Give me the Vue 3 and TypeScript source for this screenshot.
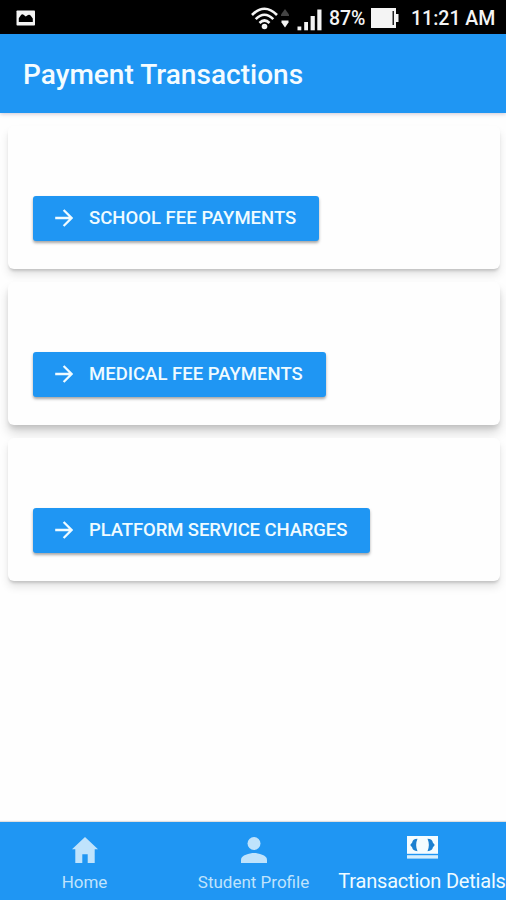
<script setup lang="ts">
interface Payment {
  id: string
  label: string
}

const payments: Payment[] = [
  { id: 'school', label: 'SCHOOL FEE PAYMENTS' },
  { id: 'medical', label: 'MEDICAL FEE PAYMENTS' },
  { id: 'platform', label: 'PLATFORM SERVICE CHARGES' },
]
</script>

<template>
  <div class="screen">
    <div class="status">
      <svg class="photo" viewBox="0 0 20 16" width="20" height="16">
        <rect x="0.5" y="0.5" width="18.5" height="15" rx="0.8" fill="#f4f4f4" />
        <path d="M2.8 12V8.2L5.2 4.8Q6.4 3.6 7.6 4.8L9.7 6.6L12 5Q13.5 4.2 14.6 5.4L16.8 8.6V12Z" fill="#000" />
      </svg>
      <svg class="wifi" viewBox="0 0 27 23" width="27" height="23">
        <g fill="none" stroke="#f4f4f4" stroke-width="2.6">
          <path d="M1 8Q13.5 -4.6 26 8" />
          <path d="M4.7 12.2Q13.5 3.2 22.3 12.2" />
          <path d="M8.5 16Q13.5 11 18.5 16" />
        </g>
        <circle cx="13.5" cy="19.5" r="2.8" fill="#f4f4f4" />
      </svg>
      <svg class="traffic" viewBox="0 0 8 20" width="8" height="20">
        <path d="M4 0L8 5.5V7H0V5.5Z" fill="#444" />
        <path d="M0.5 11.5H7.5V13.5L4 18.5L0.5 13.5Z" fill="#f4f4f4" />
      </svg>
      <svg class="signal" viewBox="0 0 25 22" width="25" height="22">
        <g fill="#f4f4f4">
          <rect x="0.5" y="17.5" width="3.8" height="3.8" />
          <rect x="7.2" y="13" width="3.8" height="8.3" />
          <rect x="13.6" y="7" width="4.2" height="14.3" />
          <rect x="20.3" y="0.5" width="4.2" height="20.8" />
        </g>
      </svg>
      <span class="percent">87%</span>
      <svg class="battery" viewBox="0 0 28 20" width="28" height="20">
        <path d="M0 0H25V6H27.5V14H25V20H0Z" fill="#f4f4f4" />
        <rect x="21.5" y="3" width="1.5" height="14" fill="#222" />
      </svg>
      <span class="clock">11:21 AM</span>
    </div>

    <header class="toolbar">
      <h1>Payment Transactions</h1>
    </header>

    <main class="content">
      <section v-for="payment in payments" :key="payment.id" class="card" :class="payment.id">
        <button type="button" class="action">
          <svg viewBox="0 0 18 18" width="18" height="18">
            <path d="M0.2 9H16.5M8.6 1L16.6 9L8.6 17" fill="none" stroke="#effbff" stroke-width="2.3" />
          </svg>
          <span>{{ payment.label }}</span>
        </button>
      </section>
    </main>

    <nav class="tabs">
      <a class="tab home">
        <svg viewBox="0 0 26 26" width="26" height="26">
          <path d="M13 0L26 12.2H22.7V26H15.7V17.3H10.3V26H3.3V12.2H0Z" fill="currentColor" />
        </svg>
        <span>Home</span>
      </a>
      <a class="tab profile">
        <svg viewBox="0 0 26 26" width="26" height="26">
          <circle cx="13" cy="6.5" r="6.5" fill="currentColor" />
          <path d="M0 26V22.7C0 18.4 8.7 16.1 13 16.1S26 18.4 26 22.7V26Z" fill="currentColor" />
        </svg>
        <span>Student Profile</span>
      </a>
      <a class="tab active">
        <svg viewBox="0 0 31 23" width="31" height="23">
          <rect x="0" y="0" width="31" height="17.8" fill="#f4fcff" />
          <rect x="0" y="19.2" width="31" height="3.4" fill="#d5eefd" />
          <path d="M10.5 2.8Q5.5 3.1 5.2 6.5L3.2 9L5.2 11.5Q5.5 14.9 10.5 15.2Q7.8 9 10.5 2.8Z" fill="#1c80d0" />
          <path d="M20.5 2.8Q25.5 3.1 25.8 6.5L27.8 9L25.8 11.5Q25.5 14.9 20.5 15.2Q23.2 9 20.5 2.8Z" fill="#1c80d0" />
        </svg>
        <span>Transaction Detials</span>
      </a>
    </nav>
  </div>
</template>

<style>
body {
  margin: 0;
  overflow: hidden;
}
</style>

<style scoped>
.screen {
  display: flex;
  flex-direction: column;
  width: 506px;
  height: 900px;
  overflow: hidden;
  background: #fefefe;
  font-family: Roboto, sans-serif;
}

.status {
  display: flex;
  flex: none;
  height: 34px;
  align-items: flex-start;
  background: #000;
  color: #f4f4f4;
  font-size: 19.5px;
  font-weight: 500;
  line-height: 22px;
  white-space: nowrap;
}

.photo {
  margin: 10px 0 0 16px;
}

.wifi {
  margin: 7px 0 0 215px;
}

.traffic {
  margin: 9px 0 0 3px;
}

.signal {
  margin: 9px 0 0 8px;
}

.percent {
  width: 37px;
  margin: 8px 0 0 7px;
  letter-spacing: -0.1px;
}

.battery {
  margin: 8px 0 0 5px;
}

.clock {
  margin: 8px 0 0 12px;
}

.toolbar {
  z-index: 1;
  display: flex;
  flex: none;
  height: 79px;
  box-sizing: border-box;
  align-items: center;
  padding: 2px 24px 0 23px;
  background: #1f96f3;
  box-shadow: 0 1px 4px rgba(60, 30, 80, 0.25);
}

h1 {
  margin: 0;
  color: #f4fcff;
  font-size: 28px;
  font-weight: 500;
  letter-spacing: 0.03px;
  line-height: 36px;
  white-space: nowrap;
}

.content {
  display: flex;
  flex: 1;
  flex-direction: column;
  gap: 13px;
  padding: 13px 6px 0 8px;
}

.card {
  display: flex;
  height: 143px;
  box-sizing: border-box;
  align-items: flex-start;
  padding: 70px 25px 0;
  border-radius: 6px;
  background: #fefefe;
  box-shadow: 0 3px 3px -1px rgba(0, 0, 0, 0.16), 0 6px 8px rgba(0, 0, 0, 0.1);
}

.card.medical {
  box-shadow: 0 4px 5px -1px rgba(0, 0, 0, 0.12), 0 8px 11px rgba(0, 0, 0, 0.15);
}

.action {
  display: flex;
  height: 45px;
  align-items: center;
  gap: 16px;
  padding: 0 23px 2px 22px;
  border: 0;
  border-radius: 3px;
  background: #1f96f3;
  box-shadow: 0 2px 3px rgba(0, 0, 0, 0.35);
  color: #effbff;
  font-family: inherit;
  font-size: 18.5px;
  font-weight: 500;
  letter-spacing: 0.02px;
  white-space: nowrap;
}

.platform .action {
  letter-spacing: -0.1px;
}

.tabs {
  display: flex;
  flex: none;
  height: 78px;
  box-sizing: border-box;
  padding-top: 15px;
  background: #1f96f3;
  box-shadow: 0 -1px 1px rgba(0, 0, 0, 0.12);
}

.tab {
  display: flex;
  width: 169px;
  flex: none;
  flex-direction: column;
  align-items: center;
  gap: 8px;
  color: #bfe3fc;
  font-size: 17px;
  line-height: 22px;
  white-space: nowrap;
}

.active {
  width: 168px;
  gap: 11px;
  margin-top: -1px;
  color: #effbff;
  font-size: 20px;
  letter-spacing: -0.2px;
}
</style>
